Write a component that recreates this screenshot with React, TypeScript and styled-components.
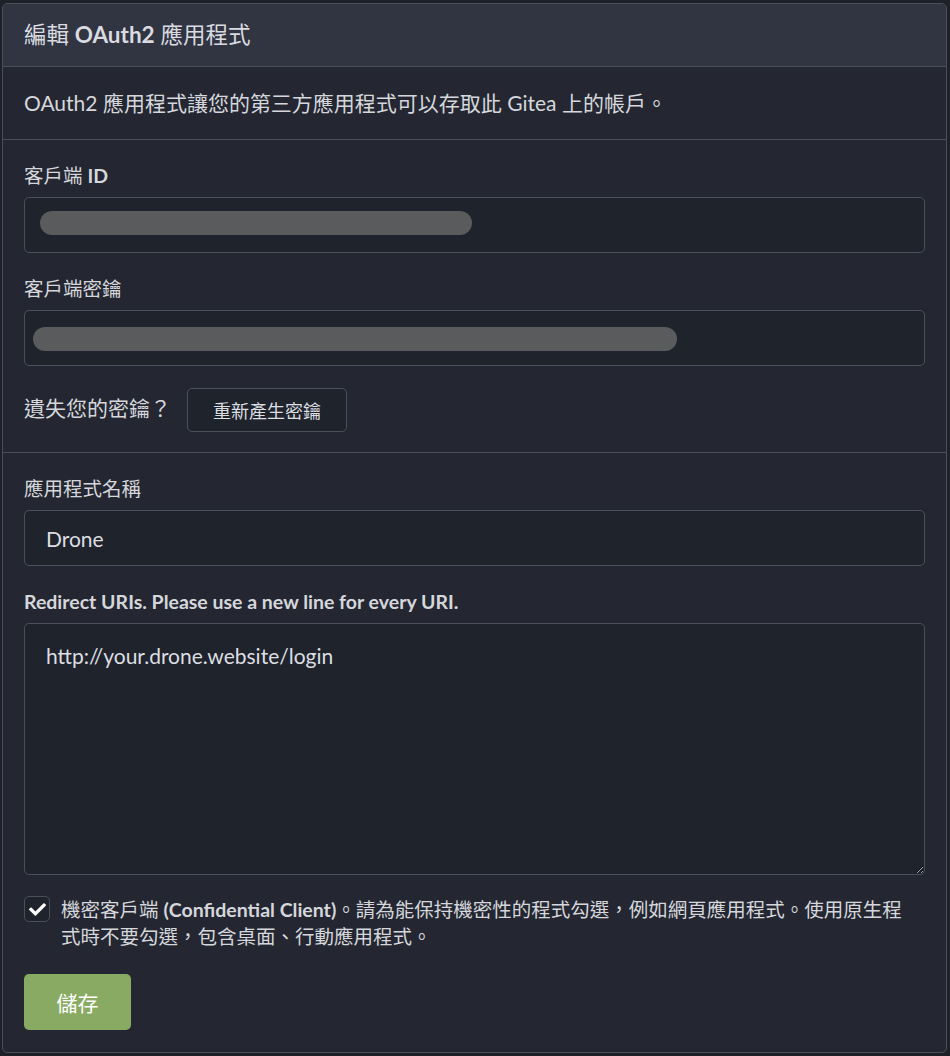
import React from "react";
import styled, { createGlobalStyle } from "styled-components";
import { FaCheck } from "react-icons/fa";

const FONT = 'Lato, "Noto Sans CJK TC", sans-serif';
const BORDER = "#4b4f5c";

const GlobalStyle = createGlobalStyle`
  html, body {
    margin: 0;
    padding: 0;
    background: #1e2128;
  }
  body {
    font-family: ${FONT};
    color: #d5d7dc;
  }
  * { box-sizing: border-box; }
`;

const Page = styled.div`
  padding: 3px 3px 3px 2px;
`;

const Panel = styled.section`
  border: 1px solid ${BORDER};
  border-radius: 5px;
  background: #242731;
  overflow: hidden;
`;

const Header = styled.h4`
  margin: 0;
  padding: 16px 21px;
  background: #313541;
  border-bottom: 1px solid ${BORDER};
  font-size: 22.5px;
  line-height: 30px;
  font-weight: 400;
  color: #d9dbe0;
`;

const Segment = styled.div<{ $divider?: boolean; $pb?: number }>`
  padding: 22px 21px ${(p) => p.$pb ?? 22}px;
  border-bottom: ${(p) => (p.$divider ? `1px solid ${BORDER}` : "none")};
`;

const DescSegment = styled.div`
  padding: 21px;
  border-bottom: 1px solid ${BORDER};
`;

const Description = styled.p`
  margin: 0;
  font-size: 21px;
  line-height: 30px;
`;

const Form = styled.div`
  display: flex;
  flex-direction: column;
`;

const Field = styled.div<{ $mb?: number }>`
  display: flex;
  flex-direction: column;
  gap: 7px;
  margin-bottom: ${(p) => p.$mb ?? 22}px;
`;

const Label = styled.label`
  font-size: 19.5px;
  line-height: 28px;
  font-weight: 400;
  color: #d5d7dc;
`;

const Strong = styled.b`
  font-weight: 700;
`;

const BoxBase = `
  width: 100%;
  border: 1px solid ${BORDER};
  border-radius: 5px;
  background: #1f232c;
  color: #dcdee2;
  font-family: ${FONT};
  font-size: 21px;
`;

const RedactedBox = styled.div<{ $inset: number; $top: number }>`
  ${BoxBase}
  height: 56px;
  padding: ${(p) => p.$top}px 0 0 ${(p) => p.$inset}px;
`;

const Redaction = styled.span`
  display: block;
  height: 24px;
  border-radius: 12px;
  background: #5a5b5c;
`;

const TextInput = styled.input`
  ${BoxBase}
  height: 56px;
  padding: 0 21px;
  outline: none;
`;

const TextArea = styled.textarea`
  ${BoxBase}
  height: 252px;
  padding: 18px 21px;
  line-height: 28px;
  resize: vertical;
  outline: none;
  display: block;
`;

const InlineRow = styled.div`
  display: flex;
  align-items: center;
  gap: 16px;
`;

const RowText = styled.span`
  font-size: 21px;
  line-height: 28px;
  margin-top: -4px;
`;

const BasicButton = styled.button`
  height: 44px;
  padding: 0 25px;
  border: 1px solid ${BORDER};
  border-radius: 5px;
  background: #1f232c;
  color: #dcdee2;
  font-family: ${FONT};
  font-size: 18px;
  cursor: pointer;
`;

const CheckRow = styled.label`
  display: flex;
  align-items: flex-start;
  gap: 11px;
  margin-bottom: 24px;
`;

const CheckBox = styled.span`
  flex: none;
  width: 26px;
  height: 26px;
  border: 1px solid ${BORDER};
  border-radius: 5px;
  background: #1f232c;
  display: flex;
  align-items: center;
  justify-content: center;
  color: #ffffff;
`;

const CheckText = styled.span`
  max-width: 848px;
  font-size: 19.5px;
  line-height: 27px;
  color: #d5d7dc;
`;

const PrimaryButton = styled.button`
  align-self: flex-start;
  height: 56px;
  width: 107px;
  padding: 0;
  border: none;
  border-radius: 5px;
  background: #88aa62;
  color: #ffffff;
  font-family: ${FONT};
  font-size: 21px;
  cursor: pointer;
`;

export default function App() {
  return (
    <>
      <GlobalStyle />
      <Page>
        <Panel>
          <Header>
            編輯 <Strong>OAuth2</Strong> 應用程式
          </Header>
          <DescSegment>
            <Description>OAuth2 應用程式讓您的第三方應用程式可以存取此 Gitea 上的帳戶。</Description>
          </DescSegment>
          <Segment $divider $pb={20}>
            <Form>
              <Field>
                <Label>
                  客戶端 <Strong>ID</Strong>
                </Label>
                <RedactedBox $inset={15} $top={13}>
                  <Redaction style={{ width: 432 }} />
                </RedactedBox>
              </Field>
              <Field>
                <Label>客戶端密鑰</Label>
                <RedactedBox $inset={8} $top={16}>
                  <Redaction style={{ width: 644 }} />
                </RedactedBox>
              </Field>
              <InlineRow>
                <RowText>遺失您的密鑰？</RowText>
                <BasicButton>重新產生密鑰</BasicButton>
              </InlineRow>
            </Form>
          </Segment>
          <Segment>
            <Form>
              <Field>
                <Label>應用程式名稱</Label>
                <TextInput defaultValue="Drone" />
              </Field>
              <Field $mb={21}>
                <Label>
                  <Strong>Redirect URIs. Please use a new line for every URI.</Strong>
                </Label>
                <TextArea defaultValue="http://your.drone.website/login" />
              </Field>
              <CheckRow>
                <CheckBox>
                  <FaCheck size={17} />
                </CheckBox>
                <CheckText>
                  機密客戶端 <Strong>(Confidential Client)</Strong>。請為能保持機密性的程式勾選，例如網頁應用程式。使用原生程式時不要勾選，包含桌面、行動應用程式。
                </CheckText>
              </CheckRow>
              <PrimaryButton>儲存</PrimaryButton>
            </Form>
          </Segment>
        </Panel>
      </Page>
    </>
  );
}
